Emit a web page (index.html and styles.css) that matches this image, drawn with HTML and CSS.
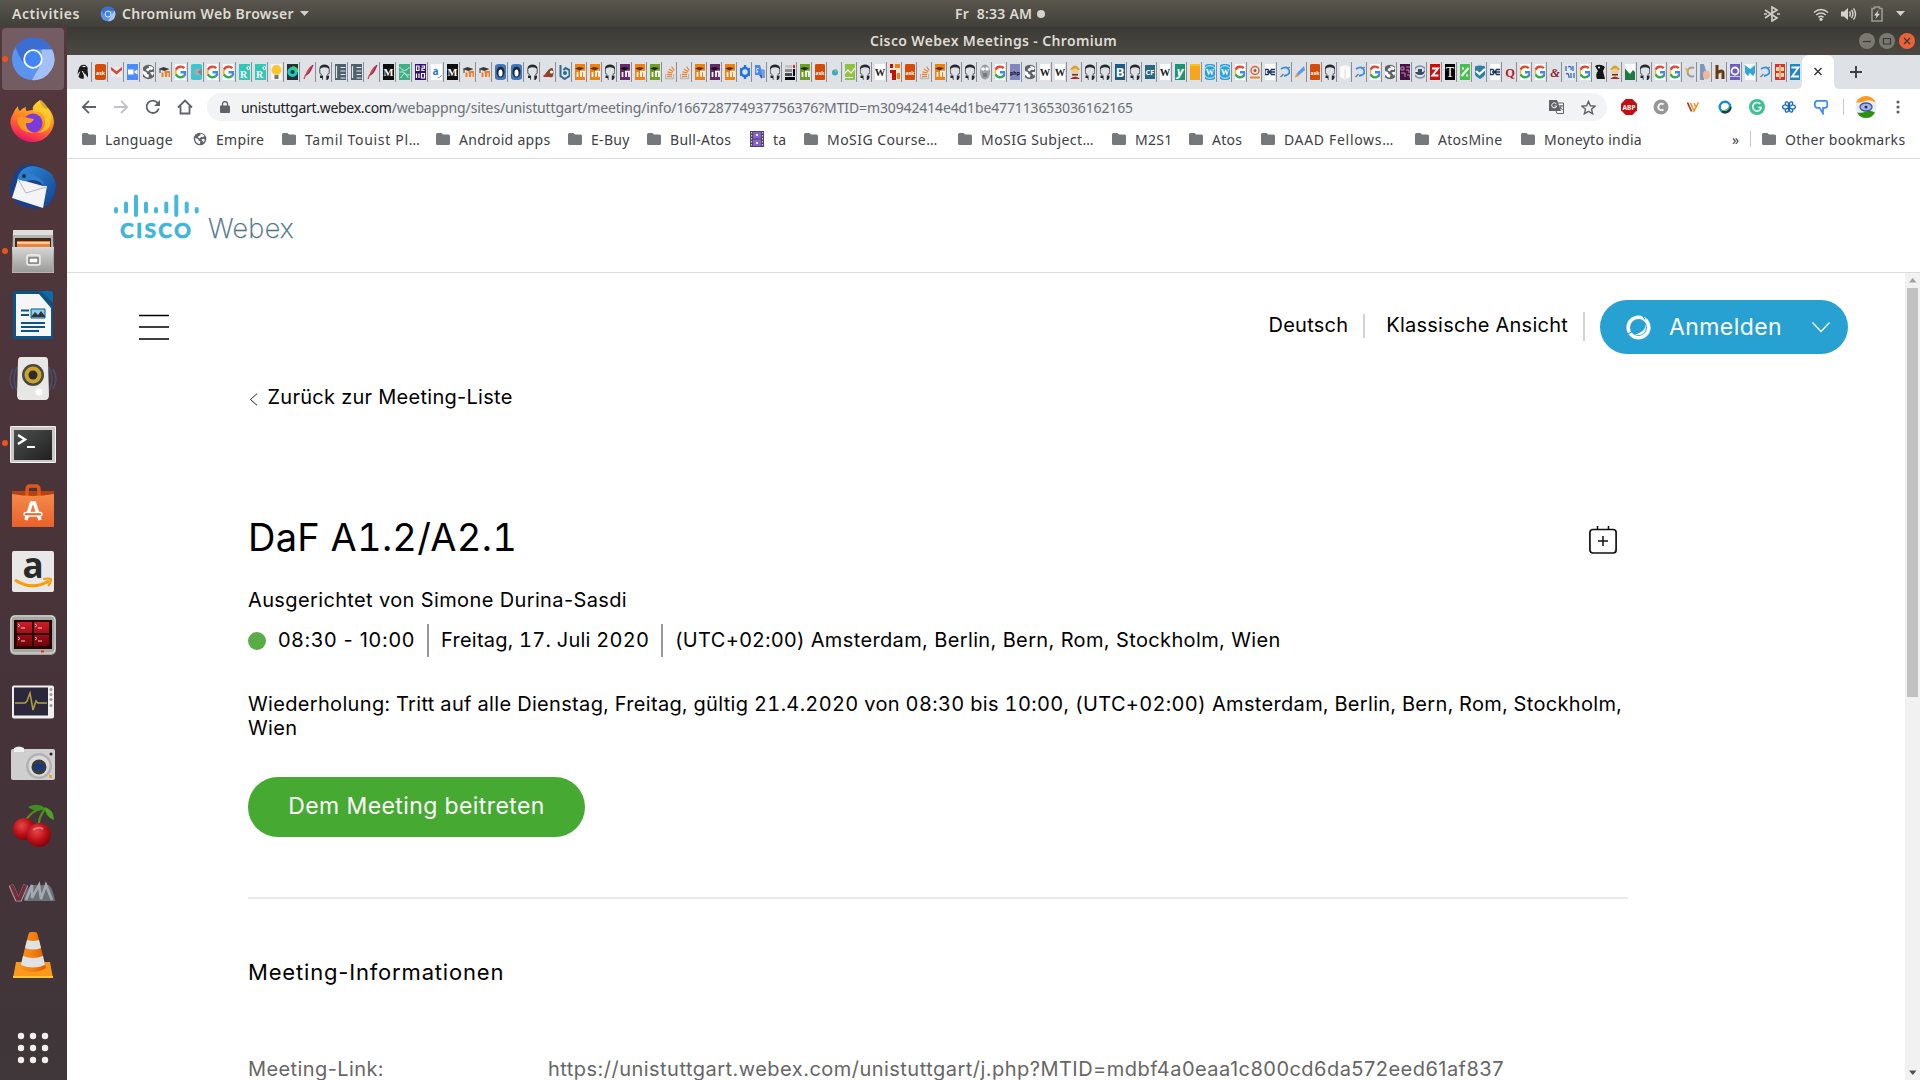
FILE: index.html
```
<!DOCTYPE html>
<html lang="de">
<head>
<meta charset="utf-8">
<title>Cisco Webex Meetings</title>
<link rel="stylesheet" href="styles.css">
</head>
<body>
<svg class="sprite" aria-hidden="true">
  <defs>
    <linearGradient id="gr-blue" x1="0" y1="0" x2="1" y2="1"><stop offset="0" stop-color="#3f6fd0"/><stop offset="1" stop-color="#8ab2f5"/></linearGradient>
    <linearGradient id="gr-fox" x1=".7" y1="0" x2=".3" y2="1"><stop offset="0" stop-color="#ffd43a"/><stop offset=".45" stop-color="#ff8a1f"/><stop offset=".8" stop-color="#fb3a4c"/><stop offset="1" stop-color="#dd0f6e"/></linearGradient>
    <linearGradient id="gr-steel" x1="0" y1="0" x2="0" y2="1"><stop offset="0" stop-color="#d6d6d4"/><stop offset="1" stop-color="#9b9b99"/></linearGradient>
    <linearGradient id="gr-bird" x1="0" y1="0" x2="1" y2="1"><stop offset="0" stop-color="#2f8fdc"/><stop offset="1" stop-color="#123f8c"/></linearGradient>
    <linearGradient id="gr-bag" x1="0" y1="0" x2="0" y2="1"><stop offset="0" stop-color="#f58a4b"/><stop offset="1" stop-color="#e9622a"/></linearGradient>
    <linearGradient id="gr-red" x1="0" y1="0" x2="0" y2="1"><stop offset="0" stop-color="#d01c25"/><stop offset="1" stop-color="#6d0208"/></linearGradient>
    <radialGradient id="gr-cherry" cx=".4" cy=".35" r=".7"><stop offset="0" stop-color="#e8474a"/><stop offset=".6" stop-color="#b80d14"/><stop offset="1" stop-color="#7a0508"/></radialGradient>
    <linearGradient id="gr-cone" x1="0" y1="0" x2="1" y2="0"><stop offset="0" stop-color="#f7931e"/><stop offset=".5" stop-color="#f57f10"/><stop offset="1" stop-color="#d95f00"/></linearGradient>
    <linearGradient id="gr-dark" x1="0" y1="0" x2="1" y2="1"><stop offset="0" stop-color="#4d4f4e"/><stop offset="1" stop-color="#202020"/></linearGradient>
  </defs>

  <symbol id="folder" viewBox="0 0 14 12"><path fill="#75797c" d="M1.5 0h4L7 1.6h5.5A1.5 1.5 0 0 1 14 3.1v7.4a1.5 1.5 0 0 1-1.5 1.5h-11A1.500 1.500 0 0 1 0 10.500v-9A1.500 1.500 0 0 1 1.500 0z"/></symbol>
  <symbol id="globe" viewBox="0 0 16 16"><circle cx="8" cy="8" r="7.200" fill="#5f6368"/><path fill="#fff" d="M2.500 6.500 6 8.300l.5 1.700 2 .8-.6 2.900a6 6 0 0 1-5.400-7.200zM8 2c1.500-.3 4 .6 5 2.300L11.500 6l-2-.5-2 2L5.500 6l1-1.500L8.800 3.800zM9.500 8.500l3-.7 1 1.200-1.500 2.800z"/></symbol>

  <symbol id="f-crow" viewBox="2.500 0 11 16" preserveAspectRatio="xMidYMid slice"><path d="M5 3q2-3 6-2 3 2 2 5l1 8-4-5-1 6q-3 0-5-2 1-4 2-6-2 1-3 4 0-4 2-8z" fill="#1b1b1b"/><path d="M8 2.500h3M8 7l2 5" stroke="#fff"/></symbol>
  <symbol id="f-ask" viewBox="2.500 0 11 16" preserveAspectRatio="xMidYMid slice"><rect x="2" width="12" height="16" rx="3" fill="#d64b06"/><text x="8" y="10.500" text-anchor="middle" font-size="5.200" font-weight="700" fill="#fff">ask</text></symbol>
  <symbol id="f-mail" viewBox="2.500 0 11 16" preserveAspectRatio="xMidYMid slice"><path d="M2 3h12v10H2z" fill="#ececec"/><path d="m2 4 6 5 6-5" fill="none" stroke="#d8463a" stroke-width="2.400"/></symbol>
  <symbol id="f-zoom" viewBox="2.500 0 11 16" preserveAspectRatio="xMidYMid slice"><rect width="16" height="16" rx="3" fill="#4a8cff"/><path d="M3.500 5.500H9v5H3.500zM10 7.300l3-1.800v5l-3-1.800z" fill="#fff"/></symbol>
  <symbol id="f-globe" viewBox="2.500 0 11 16" preserveAspectRatio="xMidYMid slice"><use href="#globe" width="16" height="16"/></symbol>
  <symbol id="f-cap" viewBox="2.500 0 11 16" preserveAspectRatio="xMidYMid slice"><path d="m2 5 5-2 6 2-5 2z" fill="#3a3a3a"/><path d="M3.500 5v4" stroke="#3a3a3a"/><path d="M6 13V8.500M9.500 13V8M13 13V8H8" stroke="#f57f20" stroke-width="2" fill="none"/></symbol>
  <symbol id="f-g" viewBox="2.500 0 11 16" preserveAspectRatio="xMidYMid slice"><rect width="16" height="16" fill="#fff"/><g fill="none" stroke-width="2.400"><path d="M11.800 4.200A5.200 5.200 0 0 0 3.400 5.700" stroke="#ea4335"/><path d="M3.400 5.700a5.200 5.200 0 0 0 0 4.700" stroke="#fbbc05"/><path d="M3.400 10.300a5.200 5.200 0 0 0 8.300 1.600" stroke="#34a853"/><path d="M8 8.200h5a5.200 5.200 0 0 1-1.600 3.900" stroke="#4285f4"/></g></symbol>
  <symbol id="f-cy" viewBox="2.500 0 11 16" preserveAspectRatio="xMidYMid slice"><rect x="2" width="12" height="16" rx="3" fill="#3ec6cf"/><circle cx="9" cy="8" r="3.400" fill="#a9a9a9"/><path d="m9 8 5-4v8z" fill="#7b8b8f"/></symbol>
  <symbol id="f-r" viewBox="2.500 0 11 16" preserveAspectRatio="xMidYMid slice"><rect width="16" height="16" fill="#34c7b5"/><text x="7" y="14" text-anchor="middle" font-size="10" font-family="Liberation Serif" font-weight="700" fill="#fff">R</text><circle cx="12" cy="4" r="1.500" fill="none" stroke="#fff"/></symbol>
  <symbol id="f-bulb" viewBox="2.500 0 11 16" preserveAspectRatio="xMidYMid slice"><rect width="16" height="16" fill="#f4f4f4"/><circle cx="8" cy="6" r="5" fill="#fbc62c"/><path d="M6 11h4v4H6z" fill="#777"/></symbol>
  <symbol id="f-cam" viewBox="2.500 0 11 16" preserveAspectRatio="xMidYMid slice"><rect width="16" height="16" fill="#2b2f38"/><circle cx="8" cy="8" r="3.600" fill="none" stroke="#19d0c0" stroke-width="3"/><path d="M8 3a5 5 0 0 1 5 5" stroke="#3ddc5a" stroke-width="2" fill="none"/></symbol>
  <symbol id="f-pen" viewBox="2.500 0 11 16" preserveAspectRatio="xMidYMid slice"><path d="M12.500 1C9 2 5 8 5 12c3-1 7-6 7.500-11z" fill="#e2492f"/><path d="M12.500 1 8 9l-3 2" stroke="#8d2b86" stroke-width="1.300" fill="none"/><path d="m5 11-1.500 4" stroke="#bb4e2e" stroke-width="1.200"/></symbol>
  <symbol id="f-gh" viewBox="2.500 0 11 16" preserveAspectRatio="xMidYMid slice"><path d="M3 6.500Q2.500 3 4.500 1.500q3.500-1.800 7 0 2 1.500 1.500 5l-1.500-2.500q-3.500-1.500-7 0z" fill="#24292e"/><path d="M3.300 6v3q.7 1 2 1.500M12.700 6v3q-.7 1-2 1.500" fill="none" stroke="#24292e" stroke-width="1.100" opacity=".7"/><path d="M3.500 11.500h3V16H6l-.5-2h-2zM9.800 11.500h2.700V14l-1.500 2H9.800z" fill="#24292e"/></symbol>
  <symbol id="f-doc" viewBox="2.500 0 11 16" preserveAspectRatio="xMidYMid slice"><rect width="16" height="16" fill="#4d606e"/><path d="M4 2v12M8 3.500h5M8 7h5M8 10.500h5M8 14h5" stroke="#dfe5e9" stroke-width="1.200"/></symbol>
  <symbol id="f-m" viewBox="2.500 0 11 16" preserveAspectRatio="xMidYMid slice"><rect width="16" height="16" fill="#0e0e0e"/><text x="8" y="12" text-anchor="middle" font-size="10.500" font-family="Liberation Serif" font-weight="700" fill="#fff">M</text></symbol>
  <symbol id="f-gn" viewBox="2.500 0 11 16" preserveAspectRatio="xMidYMid slice"><rect width="16" height="16" fill="#3db184"/><path d="M3 3q5 7 10 0M3 8h4l3 3h3M4 14l4-5 4 5" fill="none" stroke="#c9eddd"/></symbol>
  <symbol id="f-dz" viewBox="2.500 0 11 16" preserveAspectRatio="xMidYMid slice"><rect width="16" height="16" fill="#31106e"/><path d="M4 2v4.500h2.500V2zM9 2h3v2.200H9.500v2.300H12M4 9.500V14M6 9.500h.1M6.500 9.500V14M9 9.500h3V14H9z" fill="none" stroke="#fff" stroke-width="1.200"/></symbol>
  <symbol id="f-a" viewBox="2.500 0 11 16" preserveAspectRatio="xMidYMid slice"><rect width="16" height="16" fill="#fff"/><text x="7" y="11" text-anchor="middle" font-size="10" font-weight="700" fill="#2077b8">a</text><path d="M9 14q3 0 4-3" stroke="#999" fill="none"/></symbol>
  <symbol id="f-ox" viewBox="2.500 0 11 16" preserveAspectRatio="xMidYMid slice"><rect x="2" width="12" height="16" rx="4" fill="#3f78bd"/><ellipse cx="8" cy="8" rx="4" ry="5.500" fill="#1d2a3a"/><ellipse cx="8" cy="9" rx="2" ry="3.500" fill="#fff"/></symbol>
  <symbol id="f-bird" viewBox="2.500 0 11 16" preserveAspectRatio="xMidYMid slice"><path d="M4 11q5-8 8-7 2 5 0 9-5 1-8-2z" fill="#7b4a33"/><path d="M3 11h6v2H3z" fill="#c3301f"/><circle cx="11" cy="8" r="1.500" fill="#fff"/></symbol>
  <symbol id="f-b" viewBox="2.500 0 11 16" preserveAspectRatio="xMidYMid slice"><path d="M4 1v11l4 3 5-3V6L9 4 7 6" fill="none" stroke="#2e6a94" stroke-width="2"/><circle cx="8.500" cy="9" r="2" fill="#2e6a94"/></symbol>
  <symbol id="f-mo" viewBox="2.500 0 11 16" preserveAspectRatio="xMidYMid slice"><rect width="16" height="16" fill="#f0800f"/><path d="m3 4.500 4-1.500 5 1-4 2.500z" fill="#5a3308"/><path d="M5.500 13V8M9 13V7.500M12 13V7.500H8" stroke="#fff" stroke-width="1.700" fill="none"/></symbol>
  <symbol id="f-mp" viewBox="2.500 0 11 16" preserveAspectRatio="xMidYMid slice"><rect width="16" height="16" fill="#642b67"/><path d="m3 4.500 4-1.500 5 1-4 2.500z" fill="#1d0b1e"/><path d="M5.500 13V8M9 13V7.500M12 13V7.500H8" stroke="#fff" stroke-width="1.700" fill="none"/></symbol>
  <symbol id="f-mg" viewBox="2.500 0 11 16" preserveAspectRatio="xMidYMid slice"><rect width="16" height="16" fill="#6da023"/><path d="m3 4.500 4-1.500 5 1-4 2.500z" fill="#1d2b0a"/><path d="M5.500 13V8M9 13V7.500M12 13V7.500H8" stroke="#fff" stroke-width="1.700" fill="none"/></symbol>
  <symbol id="f-so" viewBox="2.500 0 11 16" preserveAspectRatio="xMidYMid slice"><path d="M3.500 10v4.500h8V10" fill="none" stroke="#bcbbbb" stroke-width="1.300"/><path d="M5 12.500h5M5 10.300l5 .4M5.500 7.800l5 1.200M7 5l4.200 2.700M9.500 2.500l2.800 4" stroke="#f48024" stroke-width="1.200"/></symbol>
  <symbol id="f-gear" viewBox="2.500 0 11 16" preserveAspectRatio="xMidYMid slice"><circle cx="8" cy="8" r="4" fill="none" stroke="#1a73e8" stroke-width="2.600"/><path d="M8 1v2M8 13v2M2 4.500l2 1M12 10.500l2 1M2 11.500l2-1M12 5.500l2-1" stroke="#1a73e8" stroke-width="2.400"/></symbol>
  <symbol id="f-tr" viewBox="2.500 0 11 16" preserveAspectRatio="xMidYMid slice"><path d="M3 1h5l3 10H3z" fill="#4a86ee"/><path d="M9 5l5 1v8H8l2-3z" fill="#7d9fd8"/><path d="m7 11 3 4v-4z" fill="#2b5cc4"/><path d="M6.500 4.500Q4 4 4.500 5.500T6 8H4" fill="none" stroke="#fff"/></symbol>
  <symbol id="f-bars" viewBox="2.500 0 11 16" preserveAspectRatio="xMidYMid slice"><path d="M3 1h7v3H3z" fill="#c5c5c5"/><path d="M3 5h7v3H3z" fill="#8d8d8d"/><path d="M3 9h7v3H3z" fill="#4a4a4a"/><path d="M3 13h11v3H3zM11 5h3v7h-3z" fill="#060606"/><path d="M11 1h3v3h-3z" fill="#c62828"/></symbol>
  <symbol id="f-sg" viewBox="2.500 0 11 16" preserveAspectRatio="xMidYMid slice"><circle cx="8" cy="8.500" r="3" fill="#38a9c9"/><path d="m7 6 3-1-1 4z" fill="#8bc34a"/></symbol>
  <symbol id="f-ch" viewBox="2.500 0 11 16" preserveAspectRatio="xMidYMid slice"><rect width="16" height="16" fill="#8fc442"/><path d="m3 9 3-3 3 3 4-5M3 13.500h8" fill="none" stroke="#fff" stroke-width="1.200"/></symbol>
  <symbol id="f-w" viewBox="2.500 0 11 16" preserveAspectRatio="xMidYMid slice"><rect width="16" height="16" fill="#fff"/><text x="8" y="12" text-anchor="middle" font-size="10.500" font-weight="700" font-family="Liberation Serif" fill="#222">W</text></symbol>
  <symbol id="f-fl" viewBox="2.500 0 11 16" preserveAspectRatio="xMidYMid slice"><rect width="16" height="16" fill="#f8e6d0"/><path d="M3 0h3v4H3zM3 6h6v10H5V9H3z" fill="#c40d0d"/><path d="M8 0h6v4H8zM10 9h4v6h-4z" fill="#f0800f"/></symbol>
  <symbol id="f-owl" viewBox="2.500 0 11 16" preserveAspectRatio="xMidYMid slice"><ellipse cx="8" cy="8" rx="5" ry="7.500" fill="#9aa1a8"/><circle cx="6" cy="5" r="1.800" fill="#fff"/><circle cx="10" cy="5" r="1.800" fill="#fff"/><path d="M6 10h4M6 12h4" stroke="#555"/></symbol>
  <symbol id="f-php" viewBox="2.500 0 11 16" preserveAspectRatio="xMidYMid slice"><rect width="16" height="16" fill="#8086c2"/><text x="8" y="10.500" text-anchor="middle" font-size="5.200" font-weight="700" fill="#111">php</text></symbol>
  <symbol id="f-wk" viewBox="2.500 0 11 16" preserveAspectRatio="xMidYMid slice"><path d="M3 6q5-9 10 0z" fill="#d9a522"/><circle cx="8" cy="8" r="3.500" fill="#f0c99a"/><path d="M5 10h6v1.500H5z" fill="#5b3a1e"/><path d="M3 15q5-5 10 0z" fill="#b5271e"/></symbol>
  <symbol id="f-bb" viewBox="2.500 0 11 16" preserveAspectRatio="xMidYMid slice"><rect width="16" height="16" fill="#1f5a86"/><text x="8" y="13" text-anchor="middle" font-size="13" font-weight="700" fill="#fff">B</text></symbol>
  <symbol id="f-cf" viewBox="2.500 0 11 16" preserveAspectRatio="xMidYMid slice"><rect y="1" width="16" height="14" fill="#2a6782"/><text x="8" y="11" text-anchor="middle" font-size="7.500" font-weight="700" fill="#fff">CF</text></symbol>
  <symbol id="f-y" viewBox="2.500 0 11 16" preserveAspectRatio="xMidYMid slice"><rect width="16" height="16" fill="#1f9470"/><text x="8" y="12" text-anchor="middle" font-size="13" font-style="italic" font-weight="700" fill="#fff">y</text></symbol>
  <symbol id="f-or" viewBox="2.500 0 11 16" preserveAspectRatio="xMidYMid slice"><rect width="16" height="16" fill="#f7a51b"/><path d="M2 0h12v2H2z" fill="#fbbf24"/></symbol>
  <symbol id="f-wp" viewBox="2.500 0 11 16" preserveAspectRatio="xMidYMid slice"><rect width="16" height="16" rx="7" fill="#2a9fd8"/><circle cx="8" cy="8" r="6.300" fill="none" stroke="#d6eefa"/><text x="8" y="11" text-anchor="middle" font-size="8.500" font-family="Liberation Serif" font-weight="700" fill="#fff">W</text></symbol>
  <symbol id="f-sw" viewBox="2.500 0 11 16" preserveAspectRatio="xMidYMid slice"><rect width="16" height="16" fill="#f2e6dc"/><circle cx="8" cy="6.500" r="4" fill="none" stroke="#c06a55" stroke-width="1.500"/><circle cx="8" cy="6.500" r="1.500" fill="#b24a3c"/><path d="M3 13.500h10" stroke="#d98c3f" stroke-width="2"/></symbol>
  <symbol id="f-xc" viewBox="2.500 0 11 16" preserveAspectRatio="xMidYMid slice"><rect width="16" height="16" fill="#fff"/><path d="M3 5.500h3l1.500 2.500L6 10.500H3zM13 5.500H9.500L8 8l1.500 2.500H13M5 8h8" stroke="#14305f" stroke-width="1.300" fill="none"/></symbol>
  <symbol id="f-sy" viewBox="2.500 0 11 16" preserveAspectRatio="xMidYMid slice"><path d="M4 5q6-3.500 8 1T7 12" fill="none" stroke="#2f8de4" stroke-width="1.800"/><path d="m3.500 13 3-3M11.500 3l1.500 1" stroke="#777" stroke-width="1.300"/></symbol>
  <symbol id="f-pc" viewBox="2.500 0 11 16" preserveAspectRatio="xMidYMid slice"><path d="M12 2 5 9l1 3 7-6z" fill="#5b9bea"/><path d="m5 9-3 5 5-2z" fill="#e89a3c"/></symbol>
  <symbol id="f-bx" viewBox="2.500 0 11 16" preserveAspectRatio="xMidYMid slice"><path d="m3 3 5-2 5 2v10l-5 2.500L3 13z" fill="#fafafa"/><path d="M8 5v10" stroke="#ddd"/></symbol>
  <symbol id="f-pu" viewBox="2.500 0 11 16" preserveAspectRatio="xMidYMid slice"><rect width="16" height="16" fill="#42133f"/><path d="M4 3h3v3H4zM9 3h4M9 6h3v3M4 9h4v4M10 11h3v3" fill="none" stroke="#c08bb8"/></symbol>
  <symbol id="f-dk" viewBox="2.500 0 11 16" preserveAspectRatio="xMidYMid slice"><circle cx="8" cy="8" r="6" fill="none" stroke="#7592a8" stroke-width="1.500"/><path d="M3 8h8l2-2q0 5-5 5-4 0-5-3zM6 5h4v3H6z" fill="#344f64"/></symbol>
  <symbol id="f-zr" viewBox="2.500 0 11 16" preserveAspectRatio="xMidYMid slice"><rect width="16" height="16" fill="#d00d0d"/><path d="M5 4.500h6l-5.500 7H11.500" fill="none" stroke="#fff" stroke-width="2"/></symbol>
  <symbol id="f-t" viewBox="2.500 0 11 16" preserveAspectRatio="xMidYMid slice"><rect width="16" height="16" fill="#000"/><text x="8" y="13" text-anchor="middle" font-size="14" font-family="Liberation Serif" fill="#fff">T</text></symbol>
  <symbol id="f-pr" viewBox="2.500 0 11 16" preserveAspectRatio="xMidYMid slice"><rect width="16" height="16" fill="#49c04b"/><path d="m4.500 12 7-8M5 4.500h2M9 11.500h2" stroke="#fff" stroke-width="2"/></symbol>
  <symbol id="f-ck" viewBox="2.500 0 11 16" preserveAspectRatio="xMidYMid slice"><path d="M2 3q6-3 12 0v5q-1 5-6 7-5-2-6-7z" fill="#2d7fa5"/><path d="m4 7 3.500 3L13 5" stroke="#fff" stroke-width="2.200" fill="none"/></symbol>
  <symbol id="f-q" viewBox="2.500 0 11 16" preserveAspectRatio="xMidYMid slice"><text x="8" y="12.500" text-anchor="middle" font-size="12.500" font-family="Liberation Serif" font-weight="700" fill="#b3231b">Q</text></symbol>
  <symbol id="f-am" viewBox="2.500 0 11 16" preserveAspectRatio="xMidYMid slice"><text x="8" y="12.500" text-anchor="middle" font-size="12.500" font-family="Liberation Serif" font-style="italic" font-weight="700" fill="#8f2430">&amp;</text></symbol>
  <symbol id="f-bt" viewBox="2.500 0 11 16" preserveAspectRatio="xMidYMid slice"><rect width="16" height="16" fill="#e3e9f4"/><path d="M4 2v5M6 3q4-2 3 3M11 2v5M4 10q3-2 3 4M9 9v5M12 9v5" stroke="#3565ab" fill="none" stroke-width="1.300"/></symbol>
  <symbol id="f-dw" viewBox="2.500 0 11 16" preserveAspectRatio="xMidYMid slice"><path d="M3 2q5-3 10 1l-2 4 2 8H5Q3 10 6 7z" fill="#151515"/><circle cx="7" cy="3.500" r="1" fill="#fff"/></symbol>
  <symbol id="f-gr" viewBox="2.500 0 11 16" preserveAspectRatio="xMidYMid slice"><rect width="16" height="16" fill="#fff"/><path d="M2 3l4 5 2 2 3-4 3 3v7H2z" fill="#1e7a3e"/></symbol>
  <symbol id="f-cg" viewBox="2.500 0 11 16" preserveAspectRatio="xMidYMid slice"><path d="M12 4a4.500 4.500 0 1 0 0 8" fill="none" stroke="#9b9ea3" stroke-width="2"/><path d="m3 4 4 1-1 5z" fill="#eda82b"/></symbol>
  <symbol id="f-bl" viewBox="2.500 0 11 16" preserveAspectRatio="xMidYMid slice"><path d="M3 0h4l2 7-2 9H3z" fill="#7c98bd"/><ellipse cx="9.500" cy="11" rx="3.500" ry="4.500" fill="#f0b79b"/></symbol>
  <symbol id="f-h" viewBox="2.500 0 11 16" preserveAspectRatio="xMidYMid slice"><path d="M5 1v14M5 9q6-4 6 0v6" fill="none" stroke="#663b14" stroke-width="3"/></symbol>
  <symbol id="f-po" viewBox="2.500 0 11 16" preserveAspectRatio="xMidYMid slice"><rect width="16" height="16" fill="#6c5cc8"/><circle cx="8" cy="7" r="3.500" fill="none" stroke="#fff" stroke-width="1.800"/><path d="M3 12.500h10" stroke="#d4cdf5"/></symbol>
  <symbol id="f-mc" viewBox="2.500 0 11 16" preserveAspectRatio="xMidYMid slice"><rect width="16" height="16" fill="#fff"/><path d="m3 1 5 4 5-4v8l-2 3-3-3-2 3-3-3z" fill="#2fa8d8"/></symbol>
  <symbol id="f-sh" viewBox="2.500 0 11 16" preserveAspectRatio="xMidYMid slice"><rect width="16" height="16" rx="3" fill="#d5342a"/><path d="M4 3h3v4H4zM9 3h3v4H9zM4 9h3v4H4zM9 9h3v4H9z" fill="#f8d68a"/><path d="M8 1v14" stroke="#fff"/></symbol>
  <symbol id="f-zb" viewBox="2.500 0 11 16" preserveAspectRatio="xMidYMid slice"><rect width="16" height="16" fill="#1c86c8"/><path d="M4.500 3.500h7l-6.500 9h7" fill="none" stroke="#fff" stroke-width="1.800"/></symbol>
</svg>

<header class="topbar">
  <div class="topbar-left">
    <span class="sys activities">Activities</span>
    <svg width="16" height="16" viewBox="0 0 48 48"><circle cx="24" cy="24" r="22" fill="#5b93f0"/><path d="M5 13A22 22 0 0 1 44 14H24L12 27z" fill="#3d6fce"/><path d="M44 14A22 22 0 0 1 24 46l10-18z" fill="#a9c6fa"/><circle cx="24" cy="24" r="9" fill="#4285f4" stroke="#fff" stroke-width="2.500"/></svg>
    <span class="sys app">Chromium Web Browser</span>
    <svg class="caret" width="9" height="5"><path d="M0 0h9L4.500 5z" fill="#d3d0ca"/></svg>
  </div>
  <div class="clock"><span class="sys">Fr&nbsp; 8:33 AM</span><i></i></div>
  <div class="tray">
    <svg width="18" height="16" viewBox="0 0 18 16"><path d="m2 4 12 8-5 3V1l5 3L2 12M1 8h3M14 8h3" fill="none" stroke="#cfccc6" stroke-width="1.700"/></svg>
    <svg class="wifi" width="16" height="14" viewBox="0 0 16 14"><path d="M1 5.500q7-6 14 0M3.200 8q4.800-4 9.600 0M5.500 10.300q2.500-2 5 0" fill="none" stroke="#d5d2cc" stroke-width="1.600"/><circle cx="8" cy="12.300" r="1.600" fill="#d5d2cc"/></svg>
    <svg class="vol" width="17" height="14" viewBox="0 0 17 14"><path d="M1 4.500h3L8 1v12L4 9.500H1z" fill="#d5d2cc"/><path d="M9.500 4.500q1.600 2.500 0 5M11.500 3q2.800 4 0 8M13.500 1.300q4 5.700 0 11.400" fill="none" stroke="#d5d2cc" stroke-width="1.400"/></svg>
    <svg class="bat" width="12" height="16" viewBox="0 0 12 16"><path d="M1 2.500h2.500v-1.500h5v1.500H11V15H1z" fill="none" stroke="#9b9993" stroke-width="1.600"/><path d="M7.500 4 3 9.500h2.500L4.500 13 9 7.800H6.500z" fill="#d5d2cc"/></svg>
    <svg class="caret" width="9" height="5"><path d="M0 0h9L4.500 5z" fill="#d3d0ca"/></svg>
  </div>
</header>

<div class="desktop">
<nav class="dock">
  <div class="app active running"><svg viewBox="0 0 48 48"><circle cx="24" cy="24" r="22" fill="#5b93f0"/><path d="M5.500 12A22 22 0 0 1 44 14H24L13 27z" fill="#3c6dd0"/><path d="M44 14A22 22 0 0 1 23 46l10-18V14z" fill="#a3c1f7"/><circle cx="24" cy="24" r="9.200" fill="#4285f4" stroke="#fff" stroke-width="1.800"/></svg></div>
  <div class="app"><svg viewBox="0 -1 48 48"><path d="M4 14q2-5 5-8 0 4 2 5 2-3 6-4-1 3 1 4 4-1 6-1-2-4 7-10 0 6 6 9l2-1q6 6 6 15a22 22 0 0 1-43 3Q0 20 4 14z" fill="url(#gr-fox)"/><circle cx="24" cy="23" r="9.500" fill="#7a3bdc"/><path d="M24 11q12 0 12 11 0 8-8 11 16-1 14-17-1-8-10-16-8 4-8 11z" fill="#ffd22e" opacity=".75"/><path d="M8 18q6-3 11 0l6 1q-2 5-8 4-1 7 8 10-16 0-17-15z" fill="#ff9820"/></svg></div>
  <div class="app"><svg viewBox="0 0 48 48"><path d="M3 18Q6 2 22 1l5 2q19 4 20 22-2 18-18 21Q6 46 1 30q-2-6 2-12z" fill="#1c3f88"/><path d="M8 18Q10 4 24 3q22 3 23 20-1 15-13 22 4-12 0-22-4-8-15-9-8 1-11 4z" fill="url(#gr-bird)"/><path d="m9 16 25 7 4 0-4 22L3 35z" fill="#f4f4f6"/><path d="m9 16 8 14 20-6" fill="none" stroke="#b5b8c0"/><path d="M10 17q3-8 12-6 12 4 14 12-5-6-13-6l-6 1z" fill="#2f7fd0"/><circle cx="15" cy="13" r="2" fill="#172a4d"/></svg></div>
  <div class="app running"><svg viewBox="0 0 48 48"><path d="M4 4h40l1 42H3z" fill="#b5b4b2"/><path d="M4 3h40v5H4z" fill="#dededc"/><path d="M6 11h36v12H6z" fill="#3a2a20"/><path d="M8 14h33v8H8z" fill="#ec8436"/><path d="M8 16h33" stroke="#fbe3c9" stroke-width="1.500"/><path d="M3 20h42l-1 25H4z" fill="url(#gr-steel)"/><rect x="18" y="28" width="13" height="10" rx="2" fill="#c7c7c5" stroke="#efefed" stroke-width="1.500"/><rect x="20" y="31" width="9" height="5" fill="#fff" stroke="#555"/></svg></div>
  <div class="app"><svg viewBox="0 0 48 48"><path d="M6 0h27l11 14v34H6q-2 0-2-2V2q0-2 2-2z" fill="#0b5586"/><path d="M7 3h23l12 14v28H7z" fill="#f6f6f6"/><path d="M32 0h10q2 0 2 2v10z" fill="#0a6cab"/><path d="M12 19.500h8M12 24h8M12 32h24M12 36h24M12 40h18" stroke="#0b5586" stroke-width="2"/><path d="M22 18h14v9H22z" fill="#8fd0ee" stroke="#0b5586"/><path d="m22 26 4-5 3 3 3-4 4 5v1z" fill="#333"/></svg></div>
  <div class="app"><svg viewBox="0 0 48 48"><path d="M4 14q-6 10 0 20M44 14q6 10 0 20M8 12q-6 12 0 24M40 12q6 12 0 24" fill="none" stroke="#47506e" stroke-width="1.500"/><path d="M12 2h24q3 0 3 4l1 34q0 5-4 5H12q-4 0-4-5L9 6q0-4 3-4z" fill="#e7e7e5"/><circle cx="24" cy="20" r="11" fill="#4a4844"/><circle cx="24" cy="20" r="8.500" fill="#c9a32a"/><circle cx="24" cy="20" r="4.500" fill="#2c2b29"/><circle cx="30" cy="37" r="3.500" fill="#fff"/></svg></div>
  <div class="app running"><svg viewBox="0 0 48 48"><rect x="1" y="7" width="46" height="37" rx="1" fill="#c9c9c7"/><rect x="1.500" y="7.500" width="45" height="36" rx="1" fill="none" stroke="#f5f5f5"/><rect x="5" y="11" width="38" height="30" fill="url(#gr-dark)"/><path d="m9 16 7 4.500-7 4.500" fill="none" stroke="#fff" stroke-width="2.500"/><path d="M18 28h8" stroke="#fff" stroke-width="2"/></svg></div>
  <div class="app"><svg viewBox="0 0 48 48"><path d="M3 8h42v10H3z" fill="#b8420f"/><path d="M18 15V7q0-4 3-4h6q3 0 3 4v8" fill="none" stroke="#e2561e" stroke-width="3.500"/><path d="M3 11q21 4 42 0v33H3z" fill="url(#gr-bag)"/><path d="m17 37 5.500-17h3L31 37" fill="none" stroke="#fff" stroke-width="3.500"/><rect x="15" y="29.500" width="18" height="3.500" rx="1.700" fill="#e9622a" stroke="#fff" stroke-width="1.500"/></svg></div>
  <div class="app"><svg viewBox="0 0 48 48"><rect x="3" y="4" width="42" height="41" rx="2" fill="#e8e8e8"/><text x="24" y="31" text-anchor="middle" font-size="35" font-weight="700" font-family="Open Sans" fill="#2a2a2a">a</text><path d="M6 33q17 11 34 1" fill="none" stroke="#ff9900" stroke-width="3"/><path d="M34 32q6-1 8 0 0 4-3 7" fill="none" stroke="#ff9900" stroke-width="2"/></svg></div>
  <div class="app"><svg viewBox="0 0 48 48"><rect x="1" y="4" width="46" height="40" rx="5" fill="#a5a8a2"/><rect x="2" y="5" width="44" height="37" rx="4" fill="none" stroke="#d8dad5"/><rect x="5" y="9" width="38" height="29" fill="#280305"/><path d="M8 11h15v11H8zM25 11h15v11H25zM8 24h15v11H8zM25 24h15v11H25z" fill="url(#gr-red)"/><path d="m9 13 2 1.500-2 1.500m3 1h4m10-4 2 1.500-2 1.500m3 1h4M9 26l2 1.500L9 29m3 1h4m10-4 2 1.500-2 1.500m3 1h4" fill="none" stroke="#f7c9c9"/><path d="M32 40.500h3" stroke="#f22" stroke-width="2"/></svg></div>
  <div class="app"><svg viewBox="0 -2.500 48 48"><rect x="3" y="8" width="42" height="33" rx="2" fill="#f0f0ee"/><rect x="5" y="10" width="34" height="28" fill="#2b283c"/><path d="M6 25.500h10l2-2 3-8 3 17 3-9 2 2h9" fill="none" stroke="#b3a03c" stroke-width="1.500"/><g fill="#9a9a98"><circle cx="42" cy="12" r="1.500"/><circle cx="42" cy="17" r="1.500"/><circle cx="42" cy="22" r="1.500"/><circle cx="42" cy="28" r="1.500"/></g></svg></div>
  <div class="app"><svg viewBox="0 -1 48 48"><rect x="2" y="9" width="44" height="31" rx="2" fill="#cfcfcf"/><path d="M5 8q5-3 10 0v4H5z" fill="#efefef"/><circle cx="30" cy="26" r="13" fill="#b2b2b2"/><circle cx="30" cy="26" r="10.500" fill="#dadada"/><circle cx="30" cy="27" r="7.500" fill="#3a3a3c"/><path d="M26 24h8v6h-8z" fill="#123a8a"/><circle cx="42" cy="14" r="1.500" fill="#222"/><path d="M40 35h3v3h-3z" fill="#eda62f"/></svg></div>
  <div class="app"><svg viewBox="0 0 48 48"><path d="M16 18Q26 4 36 6q-6 8-6 14" fill="none" stroke="#4f8f1d" stroke-width="2.200"/><path d="M19 4q10-5 17 1-7 6-17-1z" fill="#3f8f1e"/><path d="M36 4q9 3 9 13-9-3-9-13z" fill="#4da324"/><circle cx="15" cy="26" r="11" fill="url(#gr-cherry)"/><circle cx="30" cy="32" r="12" fill="url(#gr-cherry)"/><path d="M24 27q5-4 10-1" stroke="#f1a2a2" stroke-width="2" fill="none" opacity=".6"/></svg></div>
  <div class="app"><svg viewBox="0 -2 48 48"><path d="m2 16 6 14h3l6-14" fill="none" stroke="#9b9fa3" stroke-width="5"/><path d="m2.500 16 6 14h2l6-14" fill="none" stroke="#7b2a3e" stroke-width="3.600"/><path d="M15 32q0-9 7-16h18q4 4 6 16z" fill="#6a7178"/><path d="m17 31 6-15v13l7-13 2 14 5-14 6 15" fill="none" stroke="#a4aab0" stroke-width="2.600"/></svg></div>
  <div class="app"><svg viewBox="0 0 48 48"><path d="M7 31h34l3 16H4z" fill="#f8981d"/><path d="M4 45h40v2H4z" fill="#ffc23c"/><path d="M22 1h4q2 0 2.500 2L37 37q-13 8-26 0L19.500 3Q20 1 22 1z" fill="url(#gr-cone)"/><path d="m18 9-2 8q8 3 16 0l-2-8q-6 2-12 0zM14 25l-2 9q12 5 24 0l-2-9q-10 4-20 0z" fill="#dfe2e4"/></svg></div>
  <svg class="grid" width="32" height="32" viewBox="0 0 32 32"><g fill="#f2f1f0"><circle cx="4" cy="4" r="3.200"/><circle cx="16" cy="4" r="3.200"/><circle cx="28" cy="4" r="3.200"/><circle cx="4" cy="16" r="3.200"/><circle cx="16" cy="16" r="3.200"/><circle cx="28" cy="16" r="3.200"/><circle cx="4" cy="28" r="3.200"/><circle cx="16" cy="28" r="3.200"/><circle cx="28" cy="28" r="3.200"/></g></svg>
</nav>

<main class="window">
  <div class="titlebar">
    <span></span>
    <span class="sys title">Cisco Webex Meetings - Chromium</span>
    <span class="winbtns"><i><svg viewBox="0 0 16 16"><path d="M4 8.500h8"/></svg></i><i><svg viewBox="0 0 16 16"><path d="M4.500 5.500h7v5.500h-7z"/></svg></i><i class="close"><svg viewBox="0 0 16 16"><path d="m5 5 6 6M11 5l-6 6"/></svg></i></span>
  </div>

  <div class="tabstrip">
    <ul class="tabs">
      <li><svg><use href="#f-crow"/></svg></li><li><svg><use href="#f-ask"/></svg></li><li><svg><use href="#f-mail"/></svg></li><li><svg><use href="#f-zoom"/></svg></li><li><svg><use href="#f-globe"/></svg></li><li><svg><use href="#f-cap"/></svg></li><li><svg><use href="#f-g"/></svg></li><li><svg><use href="#f-cy"/></svg></li><li><svg><use href="#f-g"/></svg></li><li><svg><use href="#f-g"/></svg></li>
      <li><svg><use href="#f-r"/></svg></li><li><svg><use href="#f-r"/></svg></li><li><svg><use href="#f-bulb"/></svg></li><li><svg><use href="#f-cam"/></svg></li><li><svg><use href="#f-pen"/></svg></li><li><svg><use href="#f-gh"/></svg></li><li><svg><use href="#f-doc"/></svg></li><li><svg><use href="#f-doc"/></svg></li><li><svg><use href="#f-pen"/></svg></li><li><svg><use href="#f-m"/></svg></li>
      <li><svg><use href="#f-gn"/></svg></li><li><svg><use href="#f-dz"/></svg></li><li><svg><use href="#f-a"/></svg></li><li><svg><use href="#f-m"/></svg></li><li><svg><use href="#f-cap"/></svg></li><li><svg><use href="#f-cap"/></svg></li><li><svg><use href="#f-ox"/></svg></li><li><svg><use href="#f-ox"/></svg></li><li><svg><use href="#f-gh"/></svg></li><li><svg><use href="#f-bird"/></svg></li>
      <li><svg><use href="#f-b"/></svg></li><li><svg><use href="#f-mo"/></svg></li><li><svg><use href="#f-mo"/></svg></li><li><svg><use href="#f-gh"/></svg></li><li><svg><use href="#f-mp"/></svg></li><li><svg><use href="#f-mo"/></svg></li><li><svg><use href="#f-mg"/></svg></li><li><svg><use href="#f-so"/></svg></li><li><svg><use href="#f-so"/></svg></li><li><svg><use href="#f-mo"/></svg></li>
      <li><svg><use href="#f-mp"/></svg></li><li><svg><use href="#f-mo"/></svg></li><li><svg><use href="#f-gear"/></svg></li><li><svg><use href="#f-tr"/></svg></li><li><svg><use href="#f-gh"/></svg></li><li><svg><use href="#f-bars"/></svg></li><li><svg><use href="#f-mg"/></svg></li><li><svg><use href="#f-ask"/></svg></li><li><svg><use href="#f-sg"/></svg></li><li><svg><use href="#f-ch"/></svg></li>
      <li><svg><use href="#f-gh"/></svg></li><li><svg><use href="#f-w"/></svg></li><li><svg><use href="#f-fl"/></svg></li><li><svg><use href="#f-ask"/></svg></li><li><svg><use href="#f-so"/></svg></li><li><svg><use href="#f-mo"/></svg></li><li><svg><use href="#f-gh"/></svg></li><li><svg><use href="#f-gh"/></svg></li><li><svg><use href="#f-owl"/></svg></li><li><svg><use href="#f-g"/></svg></li>
      <li><svg><use href="#f-php"/></svg></li><li><svg><use href="#f-globe"/></svg></li><li><svg><use href="#f-w"/></svg></li><li><svg><use href="#f-w"/></svg></li><li><svg><use href="#f-wk"/></svg></li><li><svg><use href="#f-gh"/></svg></li><li><svg><use href="#f-gh"/></svg></li><li><svg><use href="#f-bb"/></svg></li><li><svg><use href="#f-gh"/></svg></li><li><svg><use href="#f-cf"/></svg></li>
      <li><svg><use href="#f-w"/></svg></li><li><svg><use href="#f-y"/></svg></li><li><svg><use href="#f-or"/></svg></li><li><svg><use href="#f-wp"/></svg></li><li><svg><use href="#f-wp"/></svg></li><li><svg><use href="#f-g"/></svg></li><li><svg><use href="#f-sw"/></svg></li><li><svg><use href="#f-xc"/></svg></li><li><svg><use href="#f-sy"/></svg></li><li><svg><use href="#f-pc"/></svg></li>
      <li><svg><use href="#f-ask"/></svg></li><li><svg><use href="#f-gh"/></svg></li><li><svg><use href="#f-bx"/></svg></li><li><svg><use href="#f-sy"/></svg></li><li><svg><use href="#f-g"/></svg></li><li><svg><use href="#f-globe"/></svg></li><li><svg><use href="#f-pu"/></svg></li><li><svg><use href="#f-dk"/></svg></li><li><svg><use href="#f-zr"/></svg></li><li><svg><use href="#f-t"/></svg></li>
      <li><svg><use href="#f-pr"/></svg></li><li><svg><use href="#f-ck"/></svg></li><li><svg><use href="#f-xc"/></svg></li><li><svg><use href="#f-q"/></svg></li><li><svg><use href="#f-g"/></svg></li><li><svg><use href="#f-g"/></svg></li><li><svg><use href="#f-am"/></svg></li><li><svg><use href="#f-bt"/></svg></li><li><svg><use href="#f-g"/></svg></li><li><svg><use href="#f-dw"/></svg></li>
      <li><svg><use href="#f-wk"/></svg></li><li><svg><use href="#f-gr"/></svg></li><li><svg><use href="#f-gh"/></svg></li><li><svg><use href="#f-g"/></svg></li><li><svg><use href="#f-g"/></svg></li><li><svg><use href="#f-cg"/></svg></li><li><svg><use href="#f-bl"/></svg></li><li><svg><use href="#f-h"/></svg></li><li><svg><use href="#f-po"/></svg></li><li><svg><use href="#f-mc"/></svg></li>
      <li><svg><use href="#f-sy"/></svg></li><li><svg><use href="#f-sh"/></svg></li><li><svg><use href="#f-zb"/></svg></li>
    </ul>
    <svg class="active-tab" width="44" height="34" viewBox="0 0 44 34"><path d="M0 34q6 0 6-6V8q0-8 8-8h16q8 0 8 8v20q0 6 6 6z" fill="#fff"/><path d="m18.500 13 7 7M25.500 13l-7 7" stroke="#3c4043" stroke-width="1.600"/></svg>
    <svg class="newtab" width="12" height="12" viewBox="0 0 12 12"><path d="M6 0v12M0 6h12" stroke="#3c4043" stroke-width="1.900"/></svg>
  </div>

  <div class="toolbar">
    <div class="nav">
      <svg viewBox="0 0 16 16"><path d="M15 8H2M8 1.800 1.800 8 8 14.200" fill="none" stroke="#5f6368" stroke-width="1.800"/></svg>
      <svg viewBox="0 0 16 16"><path d="M1 8h13M8 1.800 14.200 8 8 14.200" fill="none" stroke="#bfc1c4" stroke-width="1.800"/></svg>
      <svg viewBox="0 0 16 16"><path d="M13.800 9.500A6.200 6.200 0 1 1 12.600 3.800L14 5.500" fill="none" stroke="#5f6368" stroke-width="1.800"/><path d="M15 1v6H9z" fill="#5f6368"/></svg>
      <svg viewBox="0 0 16 16"><path d="M1 8.500 8 1.500l7 7M3.500 7v7.500h9V7" fill="none" stroke="#5f6368" stroke-width="1.800"/></svg>
    </div>
    <div class="omnibox">
      <svg class="lock" width="10" height="12" viewBox="0 0 10 12"><path d="M1 4.500h8q1 0 1 1V11q0 1-1 1H1q-1 0-1-1V5.500q0-1 1-1z" fill="#5f6368"/><path d="M2.500 5V3a2.500 2.500 0 0 1 5 0v2" fill="none" stroke="#5f6368" stroke-width="1.300"/></svg>
      <span class="url"><b>unistuttgart.webex.com</b><span>/webappng/sites/unistuttgart/meeting/info/166728774937756376?MTID=m30942414e4d1be477113653036162165</span></span>
      <svg class="translate" width="15" height="14" viewBox="0 0 15 14"><path d="M0 0h8l4 11H0z" fill="#5f6368"/><path d="M9 3h5.500v10.500H8L7 11" fill="none" stroke="#5f6368"/><path d="M10 6h4M12 5v1q0 3-2 4M11 7l2.500 3" stroke="#5f6368" fill="none"/><path d="M7.500 4.200A2.500 2.500 0 1 0 7.700 6H5.500" fill="none" stroke="#fff"/></svg>
      <svg class="star" width="15" height="15" viewBox="0 0 16 16"><path d="m8 1.500 2 4.600 5 .4-3.800 3.300 1.200 4.900L8 12.100l-4.400 2.600 1.200-4.900L1 6.500l5-.4z" fill="none" stroke="#5f6368" stroke-width="1.500"/></svg>
    </div>
    <div class="ext">
      <svg viewBox="0 0 16 16"><path d="M4.700 0h6.600L16 4.700v6.600L11.300 16H4.700L0 11.300V4.700z" fill="#c70d0e"/><text x="8" y="10.500" text-anchor="middle" font-size="6.500" font-weight="700" fill="#fff">ABP</text></svg>
      <svg viewBox="0 0 16 16"><circle cx="8" cy="8" r="7.500" fill="#979797"/><path d="M10.500 5.500a3.200 3.200 0 1 0 0 5" fill="none" stroke="#fff" stroke-width="1.700"/></svg>
      <svg viewBox="0 0 16 16"><path d="m2.500 3.500 4 9" fill="none" stroke="#a32d1b" stroke-width="1.600"/><path d="m5.500 4 3.500 8 4.500-8.500M9 4l1.500 3.500" fill="none" stroke="#f28c1d" stroke-width="1.500"/></svg>
      <svg viewBox="0 0 16 16"><circle cx="8" cy="8" r="6" fill="#fff"/><circle cx="8" cy="8" r="5.300" fill="none" stroke="#0d8fd0" stroke-width="2.400"/><path d="M13.300 8A5.300 5.300 0 0 1 5 12.300" fill="none" stroke="#143a5c" stroke-width="2.400"/><path d="M12 5q0 6-7 6 5 3 7.500-2z" fill="#6cc04a"/></svg>
      <svg viewBox="0 0 16 16"><circle cx="8" cy="8" r="8" fill="#3cbf93"/><path d="M11.300 5A4.300 4.300 0 1 0 12.300 8.500H9" fill="none" stroke="#fff" stroke-width="1.500"/></svg>
      <svg viewBox="0 0 16 16"><g fill="none" stroke="#1769c0" stroke-width="1.300"><path d="M7.500 7.500 5 6Q3.500 4 5 3q2-.5 2.500 1.500zM8.500 7.500 11 6q1.500-2 0-3-2-.5-2.500 1.500zM7.500 8.500 5 10q-1.500 2 0 3 2 .5 2.500-1.500zM8.500 8.500 11 10q1.500 2 0 3-2 .5-2.500-1.500zM5 6q-3-.5-3.500 2Q2 10.500 5 10M11 6q3-.5 3.500 2-.5 2.500-3.500 2"/></g></svg>
      <svg viewBox="0 0 16 16"><path d="M4 1.800h8.500q1.700 0 1.700 2v3q0 2-2 2H10v5.700L6.500 8.800H4Q1.700 8.500 1.700 5.300T4 1.800z" fill="none" stroke="#3b8cf0" stroke-width="1.700"/></svg>
    </div>
    <i class="tool-sep"></i>
    <svg class="avatar" width="22" height="22" viewBox="0 0 22 22"><circle cx="11" cy="11" r="10.500" fill="#e9ecef"/><path d="M1 6.500Q4 0 11 0t9.500 6.500Q14 3 10 5T1 6.500z" fill="#ff9a1f"/><path d="M2 16.500q5 1 9-1t9 1Q17 22 11 22T2 16.500z" fill="#2f8f12"/><ellipse cx="11" cy="11" rx="6" ry="4" fill="#a9b6dd" stroke="#3f57a5" stroke-width="1.400"/><circle cx="11" cy="11" r="1.500" fill="#1c2f77"/></svg>
    <svg class="kebab" width="4" height="14" viewBox="0 0 4 14"><g fill="#5f6368"><circle cx="2" cy="2" r="1.600"/><circle cx="2" cy="7" r="1.600"/><circle cx="2" cy="12" r="1.600"/></g></svg>
  </div>

  <div class="bookmarks">
    <ul>
      <li><svg><use href="#folder"/></svg>Language</li>
      <li><svg class="sq"><use href="#globe"/></svg>Empire</li>
      <li><svg><use href="#folder"/></svg><span class="w1">Tamil Touist Pl…</span></li>
      <li><svg><use href="#folder"/></svg>Android apps</li>
      <li><svg><use href="#folder"/></svg>E-Buy</li>
      <li><svg><use href="#folder"/></svg>Bull-Atos</li>
      <li><svg class="sq" viewBox="0 0 14 16"><rect width="14" height="16" fill="#4b4453"/><path d="M3 1h8v6.500H3zM3 8.500h8V15H3z" fill="#8c5fd0"/><path d="M1.500 1v14M12.500 1v14" stroke="#cfcad6" stroke-dasharray="1.500 1.500" stroke-width="1.200"/><path d="M6 3h2v2H6zM6 11h2v2H6z" fill="#efe6ff"/></svg>ta</li>
      <li><svg><use href="#folder"/></svg><span class="w2">MoSIG Course…</span></li>
      <li><svg><use href="#folder"/></svg><span class="w2">MoSIG Subject…</span></li>
      <li><svg><use href="#folder"/></svg>M2S1</li>
      <li><svg><use href="#folder"/></svg>Atos</li>
      <li><svg><use href="#folder"/></svg><span class="w1">DAAD Fellows…</span></li>
      <li><svg><use href="#folder"/></svg>AtosMine</li>
      <li><svg><use href="#folder"/></svg>Moneyto india</li>
    </ul>
    <span class="more">»</span>
    <i class="tool-sep"></i>
    <span class="other"><svg><use href="#folder"/></svg>Other bookmarks</span>
  </div>

  <div class="brand">
    <svg width="87" height="24" viewBox="0 0 87 24"><g stroke="#45b8de" stroke-width="4" stroke-linecap="round"><path d="M2 15v2.500M12 9.500v8M22 2.500v18.500M32 9.500v8M42 15v2.500M52.300 9.500v8M62.300 2.500v18.500M72.700 9.500v8M82.700 15v2.500"/></g></svg>
    <div class="names"><span class="cisco">CISCO</span><span class="webex">Webex</span></div>
  </div>

  <div class="page">
    <div class="content">
      <div class="topnav">
        <svg class="burger" width="30" height="26" viewBox="0 0 30 26"><path d="M0 1.500h30M0 13h30M0 25h30" stroke="#000" stroke-width="1.700"/></svg>
        <a class="lang">Deutsch</a>
        <i class="s1"></i>
        <a class="classic">Klassische Ansicht</a>
        <i class="s2"></i>
        <button class="signin">
          <svg width="25" height="25" viewBox="0 0 25 25"><circle cx="12.500" cy="12.500" r="10.300" fill="none" stroke="#fff" stroke-width="3.600"/><path d="M19.500 7q1.500 9.500-10.500 12.500 8 2 10.500-4 1-4 0-8.500z" fill="#fff"/><path d="m16.500.500 2.500 4M2 19l4-2.500" stroke="#27a1d2" stroke-width="1.200"/></svg>
          <span>Anmelden</span>
          <svg class="chev" width="18" height="11" viewBox="0 0 18 11"><path d="m.5.500 8.500 9 8.500-9" fill="none" stroke="#fff" stroke-width="1.300"/></svg>
        </button>
      </div>

      <section class="meeting">
        <a class="back"><svg width="10" height="13" viewBox="0 0 10 13"><path d="M9 .700 2.500 6.500 9 12.300" fill="none" stroke="#222" stroke-width="1"/></svg>Zurück zur Meeting-Liste</a>
        <div class="headline">
          <h1>DaF A1.2/A2.1</h1>
          <svg width="28" height="28" viewBox="0 0 28 28"><rect x=".9" y="3.500" width="26.200" height="23.500" rx="3" fill="none" stroke="#111" stroke-width="1.700"/><path d="M8.500 0v4M19.500 0v4" stroke="#111" stroke-width="1.500"/><path d="M14 10v10M9 15h10" stroke="#111" stroke-width="1.500"/></svg>
        </div>
        <p class="host">Ausgerichtet von Simone Durina-Sasdi</p>
        <div class="when"><i class="dot"></i><span class="time">08:30 - 10:00</span><span class="date">Freitag, 17. Juli 2020</span><span class="zone">(UTC+02:00) Amsterdam, Berlin, Bern, Rom, Stockholm, Wien</span></div>
        <p class="repeat">Wiederholung: Tritt auf alle Dienstag, Freitag, gültig 21.4.2020 von 08:30 bis 10:00, (UTC+02:00) Amsterdam, Berlin, Bern, Rom, Stockholm, Wien</p>
        <button class="join">Dem Meeting beitreten</button>
        <hr>
        <h2>Meeting-Informationen</h2>
        <dl><dt>Meeting-Link:</dt><dd>https://unistuttgart.webex.com/unistuttgart/j.php?MTID=mdbf4a0eaa1c800cd6da572eed61af837</dd></dl>
      </section>
    </div>
    <div class="scrollbar"><svg width="15" height="15"><path d="M4 9.500h7.500L7.700 5z" fill="#a0a0a0"/></svg><i></i><svg width="15" height="15"><path d="M4 5.500h7.500L7.700 10z" fill="#505050"/></svg></div>
  </div>
</main>
</div>
</body>
</html>
```
FILE: styles.css
```
* { box-sizing: border-box; }

body {
  margin: 0;
  width: 1920px;
  height: 1080px;
  overflow: hidden;
  display: flex;
  flex-direction: column;
  background: #fff;
  font-family: "Noto Sans", "Open Sans", sans-serif;
}

svg { display: block; flex: none; }
ul, p, h1, h2, dl, dd { margin: 0; padding: 0; font-weight: 400; }
ul { list-style: none; }
button { border: 0; padding: 0; font: inherit; }
.sprite { width: 0; height: 0; position: absolute; }

/* desktop top bar */
.topbar {
  flex: none;
  height: 27px;
  display: grid;
  grid-template-columns: 955px 1fr auto;
  align-items: center;
  background: linear-gradient(#59564d, #403f39);
}
.sys {
  font-size: 14px;
  line-height: 20px;
  font-weight: 600;
  color: #dfdbd2;
  white-space: pre;
}
.topbar-left { display: flex; align-items: center; padding-left: 12px; }
.activities { width: 88px; letter-spacing: .55px; }
.topbar .app { margin-left: 6px; letter-spacing: .32px; width: 178px; }
.clock { display: flex; align-items: center; gap: 5px; letter-spacing: .22px; }
.clock i { width: 8px; height: 8px; border-radius: 50%; background: #d5d2cb; }
.tray { display: flex; align-items: center; padding-right: 15px; }
.wifi { margin-left: 32px; }
.vol { margin-left: 11px; }
.bat { margin-left: 14px; }
.tray .caret { margin-left: 13px; }

.desktop { flex: 1; display: flex; min-height: 0; }

/* dock */
.dock {
  flex: none;
  width: 67px;
  display: flex;
  flex-direction: column;
  align-items: center;
  background: linear-gradient(#53383d, #483439 50%, #45333a 75%, #3f3739);
}
.dock .app {
  position: relative;
  width: 62px;
  height: 62px;
  margin: 1px 1px 1px 0;
  border-radius: 4px;
  display: flex;
  align-items: center;
  justify-content: center;
}
.dock .app svg { width: 48px; height: 48px; }
.dock .active { background: #745d62; }
.dock .active svg { width: 46px; height: 46px; }
.dock .running::before {
  content: "";
  position: absolute;
  left: 0;
  top: 28px;
  width: 6px;
  height: 6px;
  border-radius: 50%;
  background: #e95420;
}
.grid { margin: 45px 1px 0 0; }

/* browser window */
.window { flex: 1; min-width: 0; display: flex; flex-direction: column; background: #fff; }
.titlebar {
  flex: none;
  height: 28px;
  display: grid;
  grid-template-columns: 803px 1fr auto;
  align-items: center;
  background: linear-gradient(#3a3934, #4b4942);
}
.title { letter-spacing: .36px; }
.winbtns { display: flex; gap: 4px; padding-right: 5px; }
.winbtns i { width: 16px; height: 16px; border-radius: 50%; background: #7a7870; }
.winbtns .close { background: #ec6237; }
.winbtns path { fill: none; stroke: #3a3833; stroke-width: 1.2; }

.tabstrip { flex: none; height: 34px; display: flex; background: #dee1e6; }
.tabs { display: flex; align-items: center; padding: 0 0 0 10px; }
.tabs li {
  width: 15px;
  height: 20px;
  border-left: 1px solid #8b8e93;
  padding: 2px 0 0 3px;
}
.tabs li:nth-child(-n+31) { width: 16px; }
.tabs li:first-child { width: 14px; border: 0; padding-left: 0; }
.tabs svg { width: 10px; height: 16px; overflow: hidden; }
.tabs li:nth-child(-n+31) svg { width: 11px; }
.active-tab { margin-left: -5px; }
.newtab { margin: 11px 0 0 10px; }

.toolbar { flex: none; height: 37px; padding-bottom: 1px; display: flex; align-items: center; }
.nav { display: flex; gap: 16px; padding-left: 14px; }
.nav svg, .ext svg { width: 16px; height: 16px; }
.omnibox {
  width: 1400px;
  height: 28px;
  margin-left: 14px;
  padding-left: 13px;
  border-radius: 14px;
  display: flex;
  align-items: center;
  background: #f1f3f4;
}
.url { margin-left: 11px; width: 1308px; font-size: 14px; white-space: nowrap; color: #6b6f74; letter-spacing: -.13px; }
.url b { font-weight: 400; color: #202124; letter-spacing: -.29px; }
.star { margin-left: 17px; }
.ext { display: flex; gap: 16px; margin-left: 14px; }
.tool-sep { width: 1px; height: 16px; background: #c3c6ca; }
.toolbar .tool-sep { margin-left: 14px; }
.avatar { margin-left: 11px; }
.kebab { margin-left: 19px; }

.bookmarks {
  flex: none;
  height: 33px;
  display: flex;
  align-items: center;
  padding-left: 15px;
  padding-bottom: 6px;
  border-bottom: 1px solid #dadce0;
  font-size: 14px;
  letter-spacing: .3px;
  color: #3c4043;
  white-space: nowrap;
}
.bookmarks ul {
  width: 1650px;
  display: grid;
  grid-template-columns: 111px 89px 154px 132px 79px 103px 54px 154px 154px 77px 72px 154px 106px 129px;
}
.bookmarks li, .other { display: flex; align-items: center; gap: 9px; }
.bookmarks svg { width: 14px; height: 12px; }
.bookmarks .sq { width: 14px; height: 16px; }
.w1 { letter-spacing: .68px; }
.w2 { letter-spacing: .45px; }
.more { width: 18px; }
.other { margin-left: 11px; }

/* brand strip */
.brand {
  flex: none;
  height: 114px;
  padding: 35px 0 0 47px;
  border-bottom: 1px solid #dcdcdc;
}
.names { display: flex; align-items: baseline; padding-left: 6px; line-height: 22px; }
.cisco { width: 88px; font: 900 21px/22px Lato, sans-serif; letter-spacing: 2.2px; color: #3fb5dc; -webkit-text-stroke: .5px #3fb5dc; }
.webex { font: 200 27px/22px Inter, sans-serif; letter-spacing: .3px; color: #4f7389; -webkit-text-stroke: .25px #4f7389; }

/* meeting page */
.page {
  flex: 1;
  display: flex;
  min-height: 0;
  overflow: hidden;
  font-family: Inter, "Liberation Sans", sans-serif;
  font-size: 20px;
  line-height: 24px;
  letter-spacing: .37px;
  color: #000;
}
.content { flex: 1; }
.topnav { display: flex; align-items: center; padding: 27px 57px 0 72px; }
.burger { margin-right: auto; }
.lang, .classic { padding-bottom: 5px; letter-spacing: .24px; }
.s1, .s2 { width: 2px; background: #d3d3d3; }
.s1 { height: 24px; margin: 0 21px 2px 15px; }
.s2 { height: 29px; margin: 0 15px 1px 15px; }
.signin {
  width: 248px;
  height: 54px;
  padding-left: 26px;
  border-radius: 27px;
  display: flex;
  align-items: center;
  background: #27a1d2;
  color: #fff;
  font-size: 23px;
  letter-spacing: .42px;
}
.signin span { width: 143px; margin-left: 18px; text-align: left; }

.meeting { width: 1380px; margin-left: 181px; padding-top: 31px; }
.back { display: flex; align-items: center; gap: 9.500px; letter-spacing: .27px; }
.back svg { margin-top: 4px; }
.headline { display: flex; align-items: center; justify-content: space-between; margin-top: 104px; padding-right: 11px; }
h1 { font-size: 38px; line-height: 48px; letter-spacing: .27px; font-variant-numeric: tabular-nums; }
.headline svg { margin-top: 5px; }
.host { margin-top: 27px; }
.when { display: flex; height: 33px; margin-top: 12px; line-height: 32px; }
.dot { width: 18px; height: 18px; margin: 8px 12px 0 0; border-radius: 50%; background: #5aad46; }
.when span + span { margin-left: 12px; padding-left: 12px; border-left: 2px solid #999; }
.time { letter-spacing: .7px; }
.date { letter-spacing: .25px; font-variant-numeric: tabular-nums; }
.repeat { margin-top: 35px; letter-spacing: .333px; font-variant-numeric: tabular-nums; }
.join {
  display: block;
  width: 337px;
  height: 60px;
  margin-top: 37px;
  padding-bottom: 3px;
  border-radius: 30px;
  background: #45a932;
  color: #fff;
  font-size: 23px;
  letter-spacing: .4px;
}
hr { height: 2px; margin: 60px 0 0; border: 0; background: #e9e9e9; }
h2 { margin-top: 58px; font-size: 22px; line-height: 30px; letter-spacing: .82px; }
dl { display: grid; grid-template-columns: 300px 1fr; margin-top: 70px; color: #666; }
dt { letter-spacing: .4px; }
dd { letter-spacing: .471px; }

.scrollbar { width: 15px; display: flex; flex-direction: column; background: #f1f1f1; }
.scrollbar i { width: 11px; height: 409px; margin: 0 2px auto; background: #c1c1c1; }
```
